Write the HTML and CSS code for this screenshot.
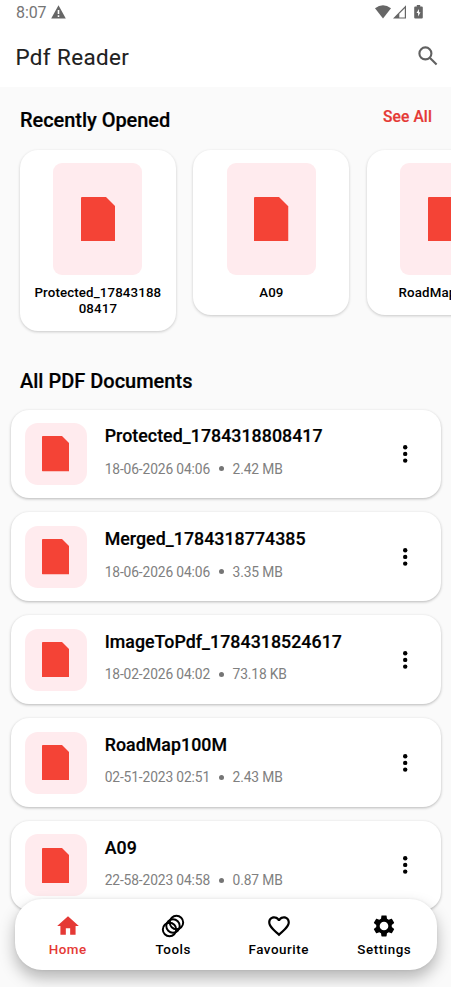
FILE: index.html
```
<!DOCTYPE html>
<html lang="en">
<head>
<meta charset="utf-8">
<title>Pdf Reader</title>
<link rel="stylesheet" href="styles.css">
</head>
<body>
<svg class="defs" aria-hidden="true">
  <symbol id="file" viewBox="0 0 34.5 44.5"><path d="M1 0H25L34.5 9.5V43.5Q34.5 44.5 33.5 44.5H1Q0 44.5 0 43.5V1Q0 0 1 0Z"/></symbol>
  <symbol id="more" viewBox="0 0 6 20"><circle cx="3.2" cy="3.2" r="2.2"/><circle cx="3.2" cy="9.9" r="2.2"/><circle cx="3.2" cy="16.6" r="2.2"/></symbol>
</svg>
<div class="screen">
  <header class="top">
    <div class="status">
      <span class="clock">8:07</span>
      <svg class="warn" viewBox="0 0 15 14"><path fill-rule="evenodd" d="M7.5 .3 14.8 13.5H.2ZM6.7 5v4h1.6V5Zm0 5.3v1.6h1.6v-1.6Z"/></svg>
      <span class="signals">
        <svg width="16" height="14" viewBox="0 0 16 14"><path d="M0 3.2Q8-2.8 16 3.2L8 13.4Z"/></svg>
        <svg width="13" height="14" viewBox="0 0 13 14"><path fill-rule="evenodd" d="M13 .3V13.5H0ZM11.8 3.3 6.3 8.8v3.6h5.5Z"/></svg>
        <svg class="battery" width="9" height="14" viewBox="0 0 9 14"><path fill-rule="evenodd" d="M2.8 0h3.4v1.4h1.6q1 0 1 1v10.2q0 1-1 1H1.2q-1 0-1-1V2.4q0-1 1-1h1.6ZM5 4 2.5 8.1h1.6v3.4l2.4-4.2H5Z"/></svg>
      </span>
    </div>
    <div class="appbar">
      <h1>Pdf Reader</h1>
      <svg class="search" viewBox="0 0 20 20"><circle cx="7.4" cy="7.4" r="6"/><path d="m12 12 6.6 6.6"/></svg>
    </div>
  </header>
  <main>
    <div class="section-head"><h2 class="recent-title">Recently Opened</h2><a>See All</a></div>
    <div class="recent">
      <article class="tile"><div class="cover"><svg><use href="#file"/></svg></div><p>Protected_17843188<br>08417</p></article>
      <article class="tile"><div class="cover"><svg><use href="#file"/></svg></div><p>A09</p></article>
      <article class="tile"><div class="cover"><svg><use href="#file"/></svg></div><p>RoadMap100M</p></article>
    </div>
    <h2 class="all">All PDF Documents</h2>
    <div class="list">
      <article class="row"><div class="thumb"><svg><use href="#file"/></svg></div><div class="info"><h3>Protected_1784318808417</h3><p><span>18-06-2026 04:06</span><i></i><span>2.42 MB</span></p></div><svg class="more"><use href="#more"/></svg></article>
      <article class="row"><div class="thumb"><svg><use href="#file"/></svg></div><div class="info"><h3>Merged_1784318774385</h3><p><span>18-06-2026 04:06</span><i></i><span>3.35 MB</span></p></div><svg class="more"><use href="#more"/></svg></article>
      <article class="row"><div class="thumb"><svg><use href="#file"/></svg></div><div class="info"><h3>ImageToPdf_1784318524617</h3><p><span>18-02-2026 04:02</span><i></i><span>73.18 KB</span></p></div><svg class="more"><use href="#more"/></svg></article>
      <article class="row"><div class="thumb"><svg><use href="#file"/></svg></div><div class="info"><h3>RoadMap100M</h3><p><span>02-51-2023 02:51</span><i></i><span>2.43 MB</span></p></div><svg class="more"><use href="#more"/></svg></article>
      <article class="row"><div class="thumb"><svg><use href="#file"/></svg></div><div class="info"><h3>A09</h3><p><span>22-58-2023 04:58</span><i></i><span>0.87 MB</span></p></div><svg class="more"><use href="#more"/></svg></article>
    </div>
  </main>
  <nav class="tabs">
    <a class="tab active"><svg viewBox="0 0 24 24"><path d="M10 20v-6h4v6h5v-8h3L12 3 2 12h3v8z"/></svg><span>Home</span></a>
    <a class="tab"><svg class="line" viewBox="0 0 24 24"><circle cx="8.8" cy="15.2" r="6.2"/><circle cx="12" cy="12" r="6.2"/><circle cx="15.2" cy="8.8" r="6.2"/></svg><span>Tools</span></a>
    <a class="tab"><svg viewBox="0 0 24 24"><path d="M16.5 3c-1.74 0-3.41.81-4.5 2.09C10.91 3.81 9.24 3 7.5 3 4.42 3 2 5.42 2 8.5c0 3.78 3.4 6.86 8.55 11.54L12 21.35l1.45-1.32C18.6 15.36 22 12.28 22 8.5 22 5.42 19.58 3 16.5 3zm-4.4 15.55-.1.1-.1-.1C7.14 14.24 4 11.39 4 8.5 4 6.5 5.5 5 7.5 5c1.54 0 3.04.99 3.57 2.36h1.87C13.46 5.99 14.96 5 16.5 5c2 0 3.5 1.5 3.5 3.5 0 2.89-3.14 5.74-7.9 10.05z"/></svg><span>Favourite</span></a>
    <a class="tab"><svg viewBox="0 0 24 24"><path d="M19.14 12.94c.04-.3.06-.61.06-.94 0-.32-.02-.64-.07-.94l2.03-1.58c.18-.14.23-.41.12-.61l-1.92-3.32c-.12-.22-.37-.29-.59-.22l-2.39.96c-.5-.38-1.03-.7-1.62-.94l-.36-2.54c-.04-.24-.24-.41-.48-.41h-3.84c-.24 0-.43.17-.47.41l-.36 2.54c-.59.24-1.13.57-1.62.94l-2.39-.96c-.22-.08-.47 0-.59.22L2.74 8.87c-.12.21-.08.47.12.61l2.03 1.58c-.05.3-.09.63-.09.94s.02.64.07.94l-2.03 1.58c-.18.14-.23.41-.12.61l1.92 3.32c.12.22.37.29.59.22l2.39-.96c.5.38 1.03.7 1.62.94l.36 2.54c.05.24.24.41.48.41h3.84c.24 0 .44-.17.47-.41l.36-2.54c.59-.24 1.13-.56 1.62-.94l2.39.96c.22.08.47 0 .59-.22l1.92-3.32c.12-.22.07-.47-.12-.61zM12 16a4 4 0 1 1 0-8 4 4 0 0 1 0 8z"/></svg><span>Settings</span></a>
  </nav>
</div>
</body>
</html>
```
FILE: styles.css
```
* { box-sizing: border-box; margin: 0; padding: 0; }
body { font-family: Roboto, "Liberation Sans", sans-serif; color: #000; background: #fafafa; overflow: hidden; }
.defs { position: absolute; width: 0; height: 0; }
.screen { position: relative; width: 451px; height: 987px; overflow: hidden; background: #fafafa; }
.top { height: 87px; background: #fff; }
.status { display: flex; height: 25px; padding: 0 28px 0 16px; color: #757575; fill: #666; }
.clock { font-size: 16px; line-height: 25px; letter-spacing: -0.1px; }
.warn { width: 15px; height: 14px; margin: 5px 0 0 5px; }
.signals { display: flex; margin: 5px 0 0 auto; gap: 2px; }
.battery { margin-left: 6px; }
.appbar { display: flex; justify-content: space-between; height: 62px; padding: 0 13.5px 0 15.5px; }
h1 { font-size: 22.4px; font-weight: 400; line-height: 65px; letter-spacing: .38px; color: #212121; -webkit-text-stroke: .1px; }
.search { width: 20px; height: 20px; margin-top: 21px; fill: none; stroke: #616161; stroke-width: 2.1; }
.section-head { display: flex; justify-content: space-between; height: 63px; padding: 0 19px 0 20px; }
h2 { font-size: 20px; font-weight: 500; line-height: 64px; -webkit-text-stroke: .2px; }
.recent-title { line-height: 66px; letter-spacing: -.05px; }
.section-head a { font-size: 15.6px; font-weight: 500; line-height: 61px; letter-spacing: .1px; color: #e53935; -webkit-text-stroke: .2px; }
.recent { display: flex; align-items: flex-start; gap: 17.5px; width: max-content; height: 199px; padding-left: 19.9px; }
.tile { width: 156px; padding: 13.2px 0 13.6px; border-radius: 18px; background: #fff; box-shadow: 0 1px 3px rgba(0,0,0,.2); }
.cover { display: grid; place-items: center; width: 89px; height: 111.4px; margin: 0 auto 10.8px; border-radius: 9px; background: #ffebee; fill: #f44336; }
.cover svg { width: 34.5px; height: 44.5px; }
.tile p { margin-bottom: -.3px; font-size: 13.3px; font-weight: 500; line-height: 16px; letter-spacing: .13px; text-align: center; }
.all { height: 60.6px; padding-left: 20px; }
.list { display: grid; gap: 14.4px; padding: 0 10px 0 11px; }
.row { display: flex; align-items: center; height: 88.5px; padding: 0 33px 0 13.7px; border-radius: 18px; background: #fff; box-shadow: 0 1px 3px rgba(0,0,0,.27); }
.thumb { display: grid; place-items: center; width: 62px; height: 62px; border-radius: 13px; background: #ffebee; fill: #f44336; }
.thumb svg { width: 27.6px; height: 35.6px; }
.info { flex: 1; margin: -4px 0 0 18px; }
h3 { font-size: 17.8px; font-weight: 500; line-height: 22px; letter-spacing: .04px; -webkit-text-stroke: .2px; }
.info p { display: flex; align-items: center; margin-top: 11.7px; font-size: 13.8px; line-height: 20px; letter-spacing: -.13px; color: #808080; }
.info i { width: 5px; height: 5px; margin: 0 8.5px 0 9px; border-radius: 50%; background: #757575; }
.more { width: 6px; height: 20px; }
.tabs { position: absolute; left: 15px; top: 899px; display: grid; grid-template-columns: repeat(4, 1fr); width: 422px; height: 71px; border-radius: 27px; background: #fff; box-shadow: 0 8px 16px rgba(0,0,0,.28), 0 0 3px rgba(0,0,0,.08); }
.tab { display: flex; flex-direction: column; align-items: center; padding-top: 13.5px; font-size: 13.4px; font-weight: 500; line-height: 16px; letter-spacing: .55px; }
.tab svg { width: 26px; height: 26px; margin-bottom: 3.2px; }
.tab .line { fill: none; stroke: #000; stroke-width: 1.8; }
.active { color: #e53935; fill: #e53935; }
```
